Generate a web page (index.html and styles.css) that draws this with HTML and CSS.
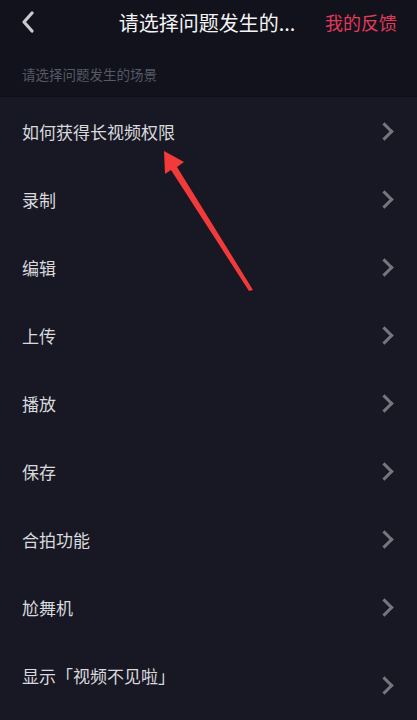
FILE: index.html
```html
<!DOCTYPE html>
<html lang="zh-CN">
<head>
	<meta charset="UTF-8">
	<title>请选择问题发生的场景</title>
	<link rel="stylesheet" href="styles.css">
</head>
<body>

<div class="page">
	<div class="top">
		<div class="barre">
			<svg class="retour" width="14" height="22" viewBox="0 0 14 22">
				<path d="M11 2 L3 11 L11 20" fill="none" stroke="#c9c9cf" stroke-width="3.2" stroke-linecap="round" stroke-linejoin="round"/>
			</svg>
			<div class="titre">请选择问题发生的...</div>
			<div class="feedback">我的反馈</div>
		</div>
		<div class="soustitre">请选择问题发生的场景</div>
	</div>

	<ul class="liste">
		<li class="ligne"><span>如何获得长视频权限</span><i class="chevron"></i></li>
		<li class="ligne"><span>录制</span><i class="chevron"></i></li>
		<li class="ligne"><span>编辑</span><i class="chevron"></i></li>
		<li class="ligne"><span>上传</span><i class="chevron"></i></li>
		<li class="ligne"><span>播放</span><i class="chevron"></i></li>
		<li class="ligne"><span>保存</span><i class="chevron"></i></li>
		<li class="ligne"><span>合拍功能</span><i class="chevron"></i></li>
		<li class="ligne"><span>尬舞机</span><i class="chevron"></i></li>
		<li class="ligne derniere"><span>显示「视频不见啦」</span><i class="chevron"></i></li>
	</ul>

	<!-- fleche rouge d'annotation -->
	<svg class="fleche" width="417" height="720" viewBox="0 0 417 720">
		<path d="M253 290 L177 167 L184 162 L164 151 L165 174 L171 170 L249 291 Z" fill="#f23a3a"/>
	</svg>
</div>

</body>
</html>
```

FILE: styles.css
```css
	body {
		margin:0;
		background:#171823;
		font-family:"Noto Sans CJK SC", "Noto Sans", sans-serif;
	}
	.page {
		position:relative;
		width:417px;
		height:720px;
		overflow:hidden;
	}
	.top {
		background:#11121b;
		height:96px;
		border-bottom:1px solid #0d0e15;
	}
	.barre {
		height:46px;
		display:flex;
		align-items:center;
		padding:0 20px 0 21px;
	}
	.retour {
		flex:none;
		margin-top:-2px;
	}
	.titre {
		flex:1;
		color:#f4f4f6;
		font-size:20px;
		text-align:center;
		padding-left:54px;
		margin-top:-2px;
	}
	.feedback {
		color:#e23a5c;
		font-size:18px;
		margin-top:-2px;
	}
	.soustitre {
		color:#575966;
		font-size:13.5px;
		padding:17px 22px 0;
		line-height:22px;
	}
	.liste {
		list-style:none;
		margin:0;
		padding:0;
	}
	.ligne {
		height:68px;
		display:flex;
		align-items:center;
		justify-content:space-between;
		padding:0 24px 0 22px;
		color:#d9d9de;
		font-size:17px;
	}
	.chevron {
		width:10px;
		height:10px;
		border-top:3px solid #75767e;
		border-right:3px solid #75767e;
		transform:rotate(45deg);
		margin-right:2px;
	}
	.derniere .chevron {
		margin-top:20px;
	}
	.fleche {
		position:absolute;
		left:0;
		top:0;
	}
```
